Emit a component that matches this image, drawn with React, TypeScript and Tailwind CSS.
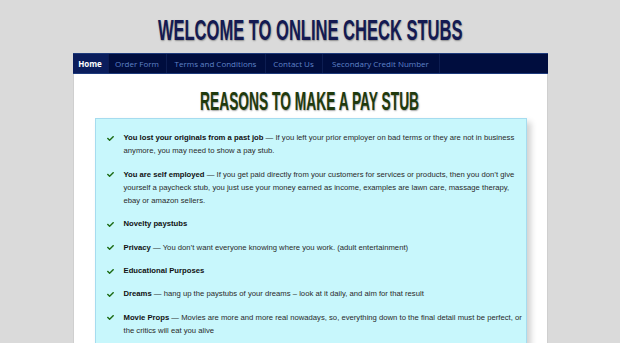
import React from "react";

const navItems = [
  { label: "Home", width: "w-[36px]", active: true },
  { label: "Order Form", width: "w-[58px]" },
  { label: "Terms and Conditions", width: "w-[99px]" },
  { label: "Contact Us", width: "w-[57px]" },
  { label: "Secondary Credit Number", width: "w-[117px]" },
];

const reasons = [
  {
    title: "You lost your originals from a past job",
    text: "If you left your prior employer on bad terms or they are not in business anymore, you may need to show a pay stub.",
  },
  {
    title: "You are self employed",
    text: "If you get paid directly from your customers for services or products, then you don\u2019t give yourself a paycheck stub, you just use your money earned as income, examples are lawn care, massage therapy, ebay or amazon sellers.",
  },
  { title: "Novelty paystubs" },
  { title: "Privacy", text: "You don\u2019t want everyone knowing where you work. (adult entertainment)" },
  { title: "Educational Purposes" },
  { title: "Dreams", text: "hang up the paystubs of your dreams \u2013 look at it daily, and aim for that result" },
  {
    title: "Movie Props",
    text: "Movies are more and more real nowadays, so, everything down to the final detail must be perfect, or the critics will eat you alive",
  },
];

function Check() {
  return (
    <svg viewBox="0 0 512 512" className="w-[7px] h-[7px] shrink-0 mt-[3.5px]" fill="#1c6b14">
      <path d="M173.9 439.4l-166.4-166.4c-10-10-10-26.2 0-36.2l36.2-36.2c10-10 26.2-10 36.2 0L192 312.7 432.1 72.6c10-10 26.2-10 36.2 0l36.2 36.2c10 10 10 26.2 0 36.2L210.1 439.4c-10 10-26.2 10-36.2 0z" />
    </svg>
  );
}

export default function App() {
  return (
    <div className="min-h-screen bg-[#dadada] overflow-hidden">
      {/* Header */}
      <div className="h-[53px] flex justify-center pt-[15px]">
        <h1 className="inline-block font-['Liberation_Sans',Arial,sans-serif] text-[29px] leading-[30px] font-bold text-[#141a52] scale-x-[0.57] whitespace-nowrap [text-shadow:1px_1px_2px_rgba(0,0,0,0.35)]">
          WELCOME TO ONLINE CHECK STUBS
        </h1>
      </div>

      <div className="w-[475px] mx-auto">
        {/* Nav */}
        <nav className="flex h-[21px] bg-[#000d3e] border-y border-[#1d3a7c] font-['Open_Sans',sans-serif]">
          {navItems.map((item) => (
            <div
              key={item.label}
              className={`${item.width} flex items-center justify-center border-r border-[#0d1d52] text-[8px] whitespace-nowrap ${
                item.active ? "bg-[#0a1d5c] text-white font-bold" : "text-[#5f82c8]"
              }`}
            >
              {item.label}
            </div>
          ))}
        </nav>

        {/* Content */}
        <div className="bg-white border-l border-r border-[#cfcfcf] pt-[12px] pb-[40px] px-[20px] min-h-[300px]">
          <h2 className="text-center font-['Liberation_Sans',Arial,sans-serif] text-[26.5px] leading-[30px] font-bold text-[#1f3a0d] [text-shadow:1px_1px_2px_rgba(0,0,0,0.35)]">
            <span className="inline-block scale-x-[0.52] whitespace-nowrap">REASONS TO MAKE A PAY STUB</span>
          </h2>

          <div className="mt-[2px] ml-[1px] bg-[#c8f7fc] border border-[#a6dcef] shadow-[4px_4px_6px_rgba(0,0,0,0.18)] pt-[12px] pb-[20px] pl-[11px] pr-[3px] font-['Liberation_Sans',Arial,sans-serif]">
            <ul className="flex flex-col gap-[10px]">
              {reasons.map((r) => (
                <li key={r.title} className="flex gap-[10px] text-[7.7px] leading-[13.3px] text-[#2a2a2a]">
                  <Check />
                  <p>
                    <span className="font-bold text-[#111]">{r.title}</span>
                    {r.text ? <> &mdash; {r.text}</> : null}
                  </p>
                </li>
              ))}
            </ul>
          </div>
        </div>
      </div>
    </div>
  );
}
